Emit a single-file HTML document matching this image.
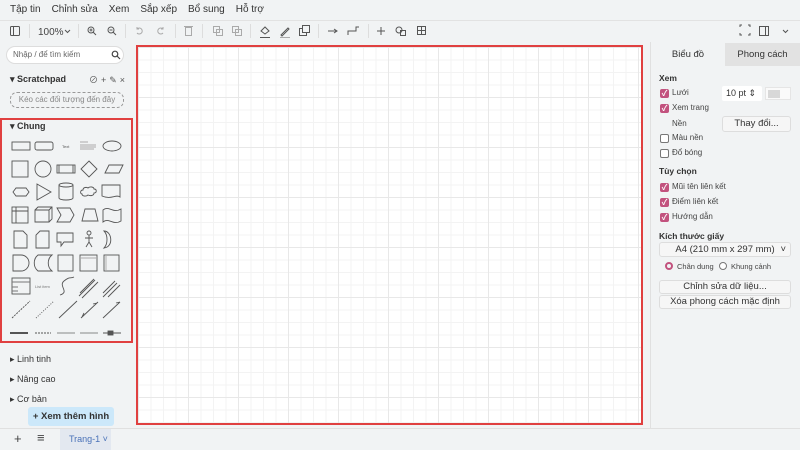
<!DOCTYPE html>
<html><head><meta charset="utf-8"><style>
*{margin:0;padding:0;box-sizing:border-box}
body{width:800px;height:450px;overflow:hidden;background:#f1f3f4;font-family:"Liberation Sans","Noto Sans CJK SC",sans-serif;font-size:10px;color:#333;position:relative}
.a{position:absolute;white-space:nowrap}
.menu span{margin-right:11px;font-size:10px}
.chk{width:9px;height:9px;border-radius:2px;background:#c2527e;display:inline-block;position:absolute;left:660px;color:#fff;font-size:8px;line-height:9px;text-align:center;font-weight:bold}
.unc{width:9px;height:9px;border-radius:2px;border:1px solid #777;background:#fff;position:absolute;left:660px}
.lbl{position:absolute;left:672px;font-size:8px;color:#444;white-space:nowrap}
.btn{position:absolute;background:#f6f6f6;border:1px solid #ddd;border-radius:3px;text-align:center;font-size:9.5px;color:#333;white-space:nowrap}
</style></head><body>
<div class="a menu" style="left:10px;top:4px">
<span>Tập tin</span><span>Chỉnh sửa</span><span>Xem</span><span>Sắp xếp</span><span>Bổ sung</span><span>Hỗ trợ</span></div>
<div class="a" style="left:0;top:20px;width:800px;height:1px;background:#e2e2e2"></div>
<svg class="a" style="left:0;top:20px" width="800" height="22" fill="none" stroke="#555" stroke-width="1">
<rect x="10.5" y="6.5" width="9" height="9" rx="1"/><line x1="13.5" y1="6.5" x2="13.5" y2="15.5"/>
<line x1="29.5" y1="4" x2="29.5" y2="18" stroke="#ddd"/>
<text x="38" y="15" font-size="10" fill="#444" stroke="none" font-family="Liberation Sans">100%</text>
<path d="M65 10l2.5 2.5 2.5-2.5"/>
<line x1="78.5" y1="4" x2="78.5" y2="18" stroke="#ddd"/>
<circle cx="91" cy="10" r="3"/><path d="M93 12l3 3M89.5 10h3M91 8.5v3"/>
<circle cx="111" cy="10" r="3"/><path d="M113 12l3 3M109.5 10h3"/>
<line x1="125.5" y1="4" x2="125.5" y2="18" stroke="#ddd"/>
<path d="M137 9a3 3 0 1 1 0 4M137 7v2h2" stroke="#aaa"/><path d="M163 9a3 3 0 1 0 0 4M163 7v2h-2" stroke="#aaa"/>
<line x1="175.5" y1="4" x2="175.5" y2="18" stroke="#ddd"/>
<rect x="185.5" y="7.5" width="6" height="8" stroke="#aaa"/><line x1="184" y1="6.5" x2="193" y2="6.5" stroke="#aaa"/>
<line x1="202.5" y1="4" x2="202.5" y2="18" stroke="#ddd"/>
<rect x="213.5" y="6.5" width="6" height="6" stroke="#aaa"/><rect x="216.5" y="9.5" width="6" height="6" stroke="#aaa"/>
<rect x="232.5" y="6.5" width="6" height="6" stroke="#aaa"/><rect x="235.5" y="9.5" width="6" height="6" stroke="#aaa"/>
<line x1="250.5" y1="4" x2="250.5" y2="18" stroke="#ddd"/>
<path d="M261 11l4-4 4 4-4 3z"/><line x1="260" y1="17.5" x2="270" y2="17.5"/>
<path d="M281 15l7-7 1 1-7 7z"/><line x1="280" y1="17.5" x2="290" y2="17.5" stroke="#aaa"/>
<rect x="299.5" y="8.5" width="7" height="7"/><rect x="302.5" y="5.5" width="7" height="7" fill="#f1f3f4"/>
<line x1="318.5" y1="4" x2="318.5" y2="18" stroke="#ddd"/>
<path d="M328 11h9M334 9l3 2-3 2"/>
<path d="M348 15v-4h8v-4h3"/>
<line x1="368.5" y1="4" x2="368.5" y2="18" stroke="#ddd"/>
<path d="M381 7v8M377 11h8"/>
<circle cx="399" cy="10" r="3"/><rect x="400.5" y="10.5" width="5" height="5"/>
<rect x="417.5" y="6.5" width="8" height="8"/><path d="M417.5 10.5h8M421.5 6.5v8"/>
<path d="M740 7v-2h2M748 5h2v2M750 13v2h-2M742 15h-2v-2"/>
<rect x="759.5" y="6.5" width="9" height="9"/><line x1="765.5" y1="6.5" x2="765.5" y2="15.5"/>
<path d="M783 10l2.5 2.5 2.5-2.5"/>
</svg>
<div class="a" style="left:6px;top:46px;width:118px;height:18px;background:#fff;border:1px solid #ddd;border-radius:9px;font-size:8px;color:#666;padding:3px 6px">Nhập / để tìm kiếm</div>
<svg class="a" style="left:111px;top:50px" width="10" height="10" fill="none" stroke="#444" stroke-width="1.2"><circle cx="4" cy="4" r="2.8"/><path d="M6 6l3 3"/></svg>
<div class="a" style="left:10px;top:74px;font-size:9px;font-weight:bold;color:#333">▾ Scratchpad</div>
<div class="a" style="left:89px;top:73px;font-size:9px;color:#555;letter-spacing:3px">⊘+✎×</div>
<div class="a" style="left:10px;top:92px;width:114px;height:16px;border:1px dashed #999;border-radius:7px;font-size:8px;color:#888;text-align:center;line-height:14px">Kéo các đối tượng đến đây</div>
<div class="a" style="left:0;top:118px;width:133px;height:225px;border:2px solid #e04040"></div>
<div class="a" style="left:10px;top:121px;font-size:9px;font-weight:bold">▾ Chung</div>
<svg class="a" style="left:0;top:130px" width="133" height="212" fill="none" stroke="#555" stroke-width="0.9">
<rect x="12" y="12" width="18" height="8"/><rect x="35" y="12" width="18" height="8" rx="2"/>
<text x="62" y="18" font-size="4" fill="#555" stroke="none">Text</text>
<path d="M80 12h8M80 15h16M80 17h16M80 19h14" stroke="#aaa"/>
<ellipse cx="112" cy="16" rx="9" ry="5"/>
<rect x="12" y="31" width="16" height="16"/><circle cx="43" cy="39" r="8"/><rect x="57" y="35" width="18" height="8"/><path d="M59 35v8M73 35v8"/>
<path d="M89 31l8 8-8 8-8-8z"/><path d="M105 43l4-8h14l-4 8z"/>
<path d="M13 62l3-4h10l3 4-3 4h-10z"/><path d="M37 54l14 8-14 8z"/><path d="M59 55v13a7 2 0 0 0 14 0v-13a7 2 0 0 0-14 0a7 2 0 0 0 14 0"/>
<path d="M83 60c0-3 4-3 5-2 2-2 6-1 6 1 3 0 3 4 0 4 0 3-4 3-6 2-2 2-6 1-6-1-2 0-2-4 1-4z"/>
<path d="M102 55h18v12c-4-3-9 3-18-1z"/>
<rect x="12" y="77" width="16" height="16"/><path d="M12 81h16M16 77v16"/>
<path d="M35 80h14v12h-14zM35 80l3-3h14v12l-3 3M49 80l3-3"/><path d="M57 78h13l4 7-4 7h-13l4-7z"/><path d="M82 91l3-12h10l3 12z"/><path d="M103 80c6-5 10 4 18-1v12c-8 5-12-4-18 1z"/>
<path d="M14 101h9l4 4v13h-13z"/><path d="M40 101h9v17h-13v-13z"/><path d="M57 103h16v9h-9l-3 4v-4h-4z"/>
<circle cx="89" cy="103" r="2"/><path d="M89 105v7M85 108h8M89 112l-3 5M89 112l3 5"/><path d="M104 101c8 0 10 16 0 17 4-4 4-13 0-17z"/>
<path d="M13 125h8a8 8 0 0 1 0 16h-8z"/><path d="M38 125h14c-5 4-5 12 0 16h-14c-5-4-5-12 0-16z"/><rect x="58" y="125" width="15" height="16"/><rect x="80" y="125" width="17" height="16"/><path d="M80 128h17" stroke="#aaa"/><rect x="104" y="125" width="15" height="16"/><path d="M106 125v16" stroke="#aaa"/>
<rect x="12" y="148" width="18" height="16"/><path d="M12 152h18M12 157h6M12 161h6" stroke="#777"/><text x="35" y="158" font-size="4" fill="#777" stroke="none">List item</text>
<path d="M60 165c10-3-2-9 4-14s6-2 10-4"/><path d="M79 166l16-16M82 168l16-16M80 163l14-14"/><path d="M103 167l14-14M108 167l12-12M103 163l12-12"/>
<path d="M12 188l18-17" stroke-dasharray="2 1"/><path d="M36 188l18-17" stroke-dasharray="1 1.5"/><path d="M59 188l18-17"/><path d="M81 188l17-16M82 187l2-4M97 173l-4 1"/><path d="M103 188l17-16M120 172l-4 1"/>
<path d="M10 203h18" stroke-width="2"/><path d="M35 203h16" stroke-dasharray="2 1"/><path d="M57 203h18" stroke="#888"/><path d="M80 203h18" stroke="#888"/><path d="M103 203h18"/><rect x="108" y="201" width="5" height="4" fill="#555"/>
</svg>
<div class="a" style="left:10px;top:354px;font-size:9px">▸ Linh tinh</div>
<div class="a" style="left:10px;top:374px;font-size:9px">▸ Nâng cao</div>
<div class="a" style="left:10px;top:394px;font-size:9px">▸ Cơ bản</div>
<div class="a" style="left:28px;top:407px;width:86px;height:19px;background:#cce8fa;border-radius:3px;font-size:9.5px;font-weight:bold;text-align:center;line-height:19px;color:#333">+ Xem thêm hình</div>
<div class="a" style="left:133px;top:42px;width:517px;height:386px;background:#f1f3f4"></div>
<div class="a" style="left:136px;top:45px;width:507px;height:380px;border:2px solid #e04040;background-color:#fff;background-image:linear-gradient(#e8e8e8 1px,transparent 1px),linear-gradient(90deg,#e8e8e8 1px,transparent 1px),linear-gradient(#f3f3f3 1px,transparent 1px),linear-gradient(90deg,#f3f3f3 1px,transparent 1px);background-size:50px 50px,50px 50px,12.5px 12.5px,12.5px 12.5px"></div>
<div class="a" style="left:0;top:428px;width:800px;height:22px;background:#f1f3f4;border-top:1px solid #e0e0e0"></div>
<div class="a" style="left:14px;top:431px;font-size:13px;color:#444">+</div>
<div class="a" style="left:37px;top:430px;font-size:13px;color:#444">≡</div>
<div class="a" style="left:60px;top:429px;width:51px;height:21px;background:#e3e8f0;font-size:9px;color:#4a72b8;line-height:21px;padding-left:9px">Trang-1 ˅</div>
<div class="a" style="left:650px;top:42px;width:150px;height:386px;background:#f1f3f4;border-left:1px solid #e0e0e0"></div>
<div class="a" style="left:651px;top:43px;width:74px;height:23px;text-align:center;line-height:23px;font-size:9.5px">Biểu đồ</div>
<div class="a" style="left:725px;top:43px;width:75px;height:23px;background:#e2e2e2;text-align:center;line-height:23px;font-size:9.5px">Phong cách</div>
<div class="a" style="left:659px;top:73px;font-size:8.5px;font-weight:bold">Xem</div>
<span class="chk" style="top:89px">✓</span><span class="lbl" style="top:88px">Lưới</span>
<div class="a" style="left:722px;top:86px;width:40px;height:15px;background:#fff;border-radius:2px;font-size:9px;text-align:right;padding:2px 6px 0 0">10 pt ⇕</div>
<div class="a" style="left:765px;top:87px;width:26px;height:13px;background:#fafafa;border:1px solid #e5e5e5"><div style="margin:2px;width:12px;height:8px;background:#d8d8d8"></div></div>
<span class="chk" style="top:104px">✓</span><span class="lbl" style="top:103px">Xem trang</span>
<span class="lbl" style="top:119px;left:672px">Nền</span>
<div class="btn" style="left:722px;top:116px;width:69px;height:16px;line-height:14px">Thay đổi...</div>
<span class="unc" style="top:134px"></span><span class="lbl" style="top:133px">Màu nền</span>
<span class="unc" style="top:149px"></span><span class="lbl" style="top:148px">Đổ bóng</span>
<div class="a" style="left:659px;top:166px;font-size:8.5px;font-weight:bold">Tùy chọn</div>
<span class="chk" style="top:183px">✓</span><span class="lbl" style="top:182px">Mũi tên liên kết</span>
<span class="chk" style="top:198px">✓</span><span class="lbl" style="top:197px">Điểm liên kết</span>
<span class="chk" style="top:213px">✓</span><span class="lbl" style="top:212px">Hướng dẫn</span>
<div class="a" style="left:659px;top:231px;font-size:8.5px;font-weight:bold">Kích thước giấy</div>
<div class="btn" style="left:659px;top:242px;width:132px;height:15px;line-height:13px">A4 (210 mm x 297 mm)<span style="position:absolute;right:4px">˅</span></div>
<div class="a" style="left:665px;top:262px;width:8px;height:8px;border-radius:50%;border:2.5px solid #c2527e"></div>
<span class="lbl" style="top:262px;left:677px;font-size:7.5px">Chân dung</span>
<div class="a" style="left:719px;top:262px;width:8px;height:8px;border-radius:50%;border:1px solid #777;background:#fff"></div>
<span class="lbl" style="top:262px;left:731px;font-size:7.5px">Khung cảnh</span>
<div class="btn" style="left:659px;top:280px;width:132px;height:14px;line-height:12px">Chỉnh sửa dữ liệu...</div>
<div class="btn" style="left:659px;top:295px;width:132px;height:14px;line-height:12px">Xóa phong cách mặc định</div>
</body></html>
